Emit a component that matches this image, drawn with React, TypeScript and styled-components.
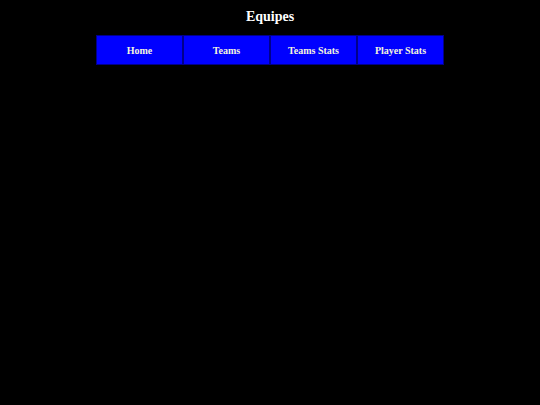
import React from "react";
import styled, { createGlobalStyle } from "styled-components";

const Global = createGlobalStyle`
  html, body { margin: 0; padding: 0; background: #000; }
  body { font-family: "Liberation Serif", "Times New Roman", serif; color: #fff; }
`;

const Page = styled.div`
  display: flex;
  flex-direction: column;
  align-items: center;
  padding-top: 8px;
`;

const Title = styled.h1`
  margin: 0;
  font-size: 14px;
  font-weight: bold;
  line-height: 17px;
  color: #fff;
`;

const Nav = styled.ul`
  list-style: none;
  margin: 10px 0 0;
  padding: 0;
  display: flex;
  width: 348px;
`;

const Item = styled.li`
  flex: 1;
  height: 30px;
  display: flex;
  align-items: center;
  justify-content: center;
  background: #0000ff;
  border: 1px solid #00008b;
  box-sizing: border-box;
  font-size: 10px;
  font-weight: bold;
  color: #f5f5dc;
`;

export default function App() {
  const items = ["Home", "Teams", "Teams Stats", "Player Stats"];
  return (
    <>
      <Global />
      <Page>
        <Title>Equipes</Title>
        <Nav>
          {items.map((t) => (
            <Item key={t}>{t}</Item>
          ))}
        </Nav>
      </Page>
    </>
  );
}
